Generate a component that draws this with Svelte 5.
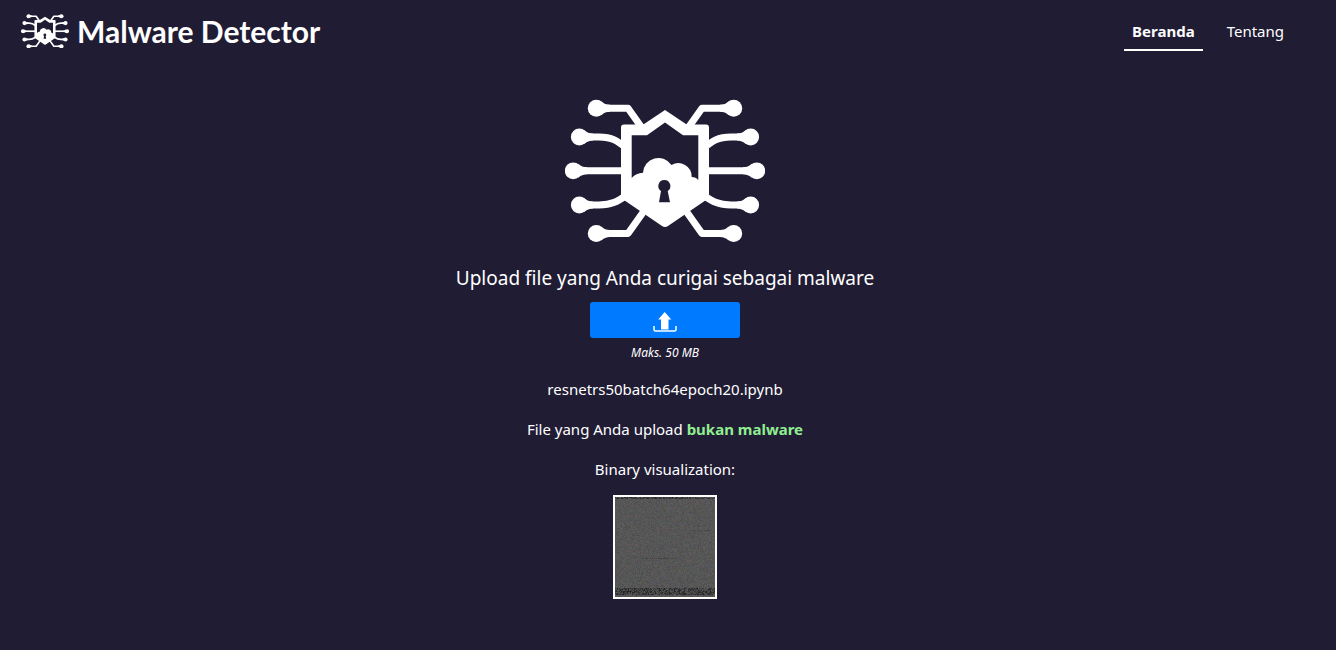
<script>
  import { onMount } from 'svelte';

  const fileName = 'resnetrs50batch64epoch20.ipynb';
  const links = [
    { label: 'Beranda', active: true },
    { label: 'Tentang', active: false },
  ];

  let canvas;

  onMount(() => {
    const size = 100;
    const ctx = canvas.getContext('2d');
    const image = ctx.createImageData(size, size);
    let seed = 20;
    const random = () => {
      seed = (seed * 1664525 + 1013904223) % 4294967296;
      return seed / 4294967296;
    };
    for (let y = 0; y < size; y++) {
      for (let x = 0; x < size; x++) {
        const sparse = y < 2 || (y > 90 && y < 98);
        const streak =
          (y === 61 && x > 24 && x < 62) || (y === 33 && x > 77 && x < 96);
        let base = 80 + random() * 12;
        if (sparse) base = 34 + random() * 58;
        if (streak) base = 62 + random() * 28;
        const i = (y * size + x) * 4;
        image.data[i] = base + random() * 18 - 9;
        image.data[i + 1] = base + random() * 14 - 7;
        image.data[i + 2] = base + random() * 18 - 9;
        image.data[i + 3] = 255;
      }
    }
    ctx.putImageData(image, 0, 0);
  });
</script>

{#snippet arms()}
  <g fill="none" stroke="currentColor" stroke-width="7" stroke-linejoin="round">
    <path d="M31 9.300H63L77 29" />
    <path d="M14 38H34C47 38 53 42 61 49" />
    <path d="M8 71.800H60" />
    <path d="M14 106H34C47 106 53 102 62 96" />
    <path d="M31 134.500H63L79 112" />
  </g>
  <g fill="currentColor">
    <circle cx="31.300" cy="9.200" r="8.500" />
    <circle cx="14.300" cy="38" r="8.400" />
    <circle cx="8.200" cy="71.800" r="8.400" />
    <circle cx="14.300" cy="106" r="8.400" />
    <circle cx="31.300" cy="134.500" r="8.500" />
    <path d="M36 2.200Q40 5.800 45 5.800V12.800Q40 12.800 36 16.200Z" />
    <path d="M19 31Q23 34.500 28 34.500V41.500Q23 41.500 19 45Z" />
    <path d="M13 64.800Q17 68.300 22 68.300V75.300Q17 75.300 13 78.800Z" />
    <path d="M19 99Q23 102.500 28 102.500V109.500Q23 109.500 19 113Z" />
    <path d="M36 127.500Q40 131 45 131V138Q40 138 36 141.500Z" />
  </g>
{/snippet}

{#snippet emblem()}
  <svg viewBox="0 0 200 144" aria-hidden="true">
    {@render arms()}
    <g transform="translate(200 0) scale(-1 1)">{@render arms()}</g>
    <path
      fill="currentColor"
      fill-rule="evenodd"
      d="M100 11L121.700 25.500H141Q144 25.500 144 28.500V99L103 127Q100 129 97 127L56 99V28.500Q56 25.500 59 25.500H78.300ZM100 23.500L82 36.300H66.700V79Q71 74 78 73.800A15.500 15.500 0 0 1 106.500 66A13.500 13.500 0 0 1 126.700 78Q131 78 133.300 81V36.300H118ZM99.300 81A6 6 0 0 0 96 92L94 103.300H105L102.700 92A6 6 0 0 0 99.300 81Z"
    />
  </svg>
{/snippet}

<header>
  <a class="brand" href="#beranda">
    {@render emblem()}
    <span>Malware Detector</span>
  </a>
  <nav>
    {#each links as link}
      <a href={'#' + link.label.toLowerCase()} class:active={link.active}>{link.label}</a>
    {/each}
  </nav>
</header>

<main>
  <div class="hero">{@render emblem()}</div>
  <h1>Upload file yang Anda curigai sebagai malware</h1>
  <button type="button" aria-label="Upload file">
    <svg viewBox="0 0 24 20" width="24" height="20" aria-hidden="true">
      <path fill="currentColor" d="M11.700 0L18.300 7.500H15.500V17.500H8V7.500H5.200Z" />
      <path
        fill="none"
        stroke="currentColor"
        stroke-width="1.500"
        d="M1 14V17.500Q1 19 2.500 19H21.500Q23 19 23 17.500V14"
      />
    </svg>
  </button>
  <small>Maks. 50 MB</small>
  <p>{fileName}</p>
  <p>File yang Anda upload <strong>bukan malware</strong></p>
  <p>Binary visualization:</p>
  <canvas bind:this={canvas} width="100" height="100"></canvas>
</main>

<style>
  :global(body) {
    margin: 0;
    background: #201c34;
    color: #fff;
    font: 15px/24px 'Noto Sans', 'Open Sans', sans-serif;
  }

  svg {
    display: block;
  }

  header {
    display: flex;
    justify-content: space-between;
    align-items: flex-start;
    padding: 12px 44px 12px 21px;
  }

  a {
    color: inherit;
    text-decoration: none;
  }

  .brand {
    display: flex;
    align-items: center;
    gap: 8px;
    font: bold 30px/38px Lato, sans-serif;
  }

  .brand svg {
    width: 48px;
  }

  nav {
    display: flex;
    gap: 16px;
  }

  nav a {
    padding: 7px 8px 6px;
    border-bottom: 2px solid transparent;
  }

  nav .active {
    font-weight: 700;
    border-color: #fff;
  }

  main {
    display: flex;
    flex-direction: column;
    align-items: center;
    padding: 36px 6px 50px 0;
    text-align: center;
  }

  .hero {
    width: 200px;
  }

  h1 {
    margin: 20px 0 9px;
    font-size: 19px;
    font-weight: 400;
    line-height: 30px;
  }

  button {
    display: grid;
    place-items: center;
    width: 150px;
    height: 36px;
    padding: 4px 0 0;
    border: 0;
    border-radius: 3px;
    background: #007bff;
    color: #fff;
    cursor: pointer;
  }

  small {
    margin-top: 3px;
    font-size: 12px;
    font-style: italic;
  }

  p {
    margin: 12px 0 4px;
  }

  strong {
    color: #90ee90;
    font-weight: 700;
  }

  canvas {
    margin-top: 10px;
    border: 2px solid #fff;
  }
</style>
